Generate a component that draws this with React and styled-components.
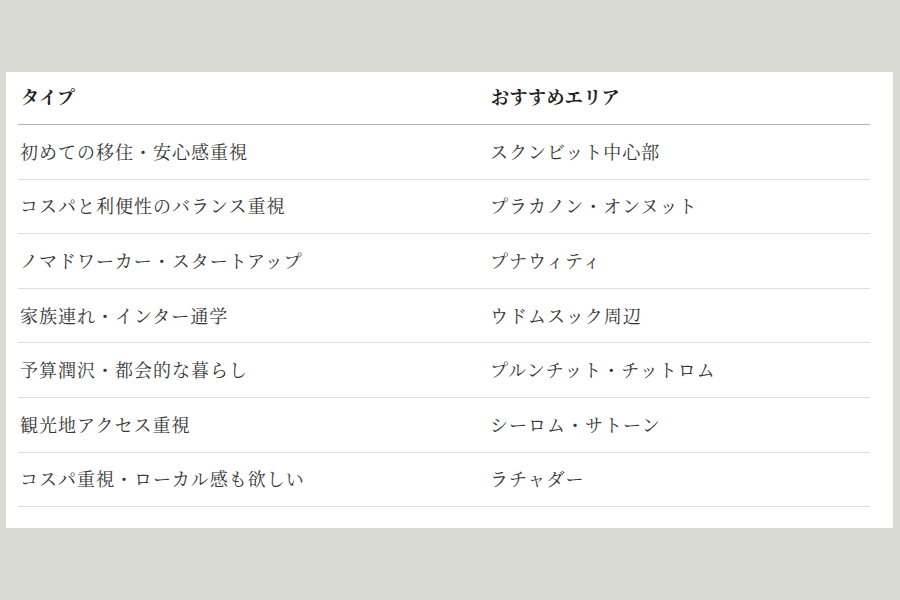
import React from "react";
import styled, { createGlobalStyle } from "styled-components";

const Global = createGlobalStyle`
  html, body { margin: 0; padding: 0; }
  body {
    background: #dadad4;
    font-family: "Noto Serif CJK JP", "Noto Sans CJK JP", "Liberation Serif", serif;
    -webkit-font-smoothing: antialiased;
  }
`;

const Page = styled.div`
  width: 900px;
  height: 600px;
  padding: 72px 7px 0 6px;
  box-sizing: border-box;
`;

const Card = styled.div`
  background: #ffffff;
  padding: 12px 23px 21px 12px;
`;

const Table = styled.div`
  display: grid;
  grid-template-columns: 470px 1fr;
`;

const HeadCell = styled.div`
  padding: 0 0 16px 3px;
  line-height: 24px;
  font-size: 18px;
  font-weight: 700;
  color: #222;
  letter-spacing: 0.4px;
  border-bottom: 1px solid #b4b4b4;
`;

const Cell = styled.div`
  display: flex;
  align-items: center;
  height: 54.6px;
  box-sizing: border-box;
  padding: 0 0 2px 2px;
  font-size: 18px;
  letter-spacing: 1px;
  color: #363636;
  border-bottom: 1px solid #dedede;
`;

const rows = [
  ["初めての移住・安心感重視", "スクンビット中心部"],
  ["コスパと利便性のバランス重視", "プラカノン・オンヌット"],
  ["ノマドワーカー・スタートアップ", "プナウィティ"],
  ["家族連れ・インター通学", "ウドムスック周辺"],
  ["予算潤沢・都会的な暮らし", "プルンチット・チットロム"],
  ["観光地アクセス重視", "シーロム・サトーン"],
  ["コスパ重視・ローカル感も欲しい", "ラチャダー"],
];

export default function App() {
  return (
    <>
      <Global />
      <Page>
        <Card>
          <Table>
            <HeadCell>タイプ</HeadCell>
            <HeadCell>おすすめエリア</HeadCell>
            {rows.map(([a, b]) => (
              <React.Fragment key={a}>
                <Cell>{a}</Cell>
                <Cell>{b}</Cell>
              </React.Fragment>
            ))}
          </Table>
        </Card>
      </Page>
    </>
  );
}
